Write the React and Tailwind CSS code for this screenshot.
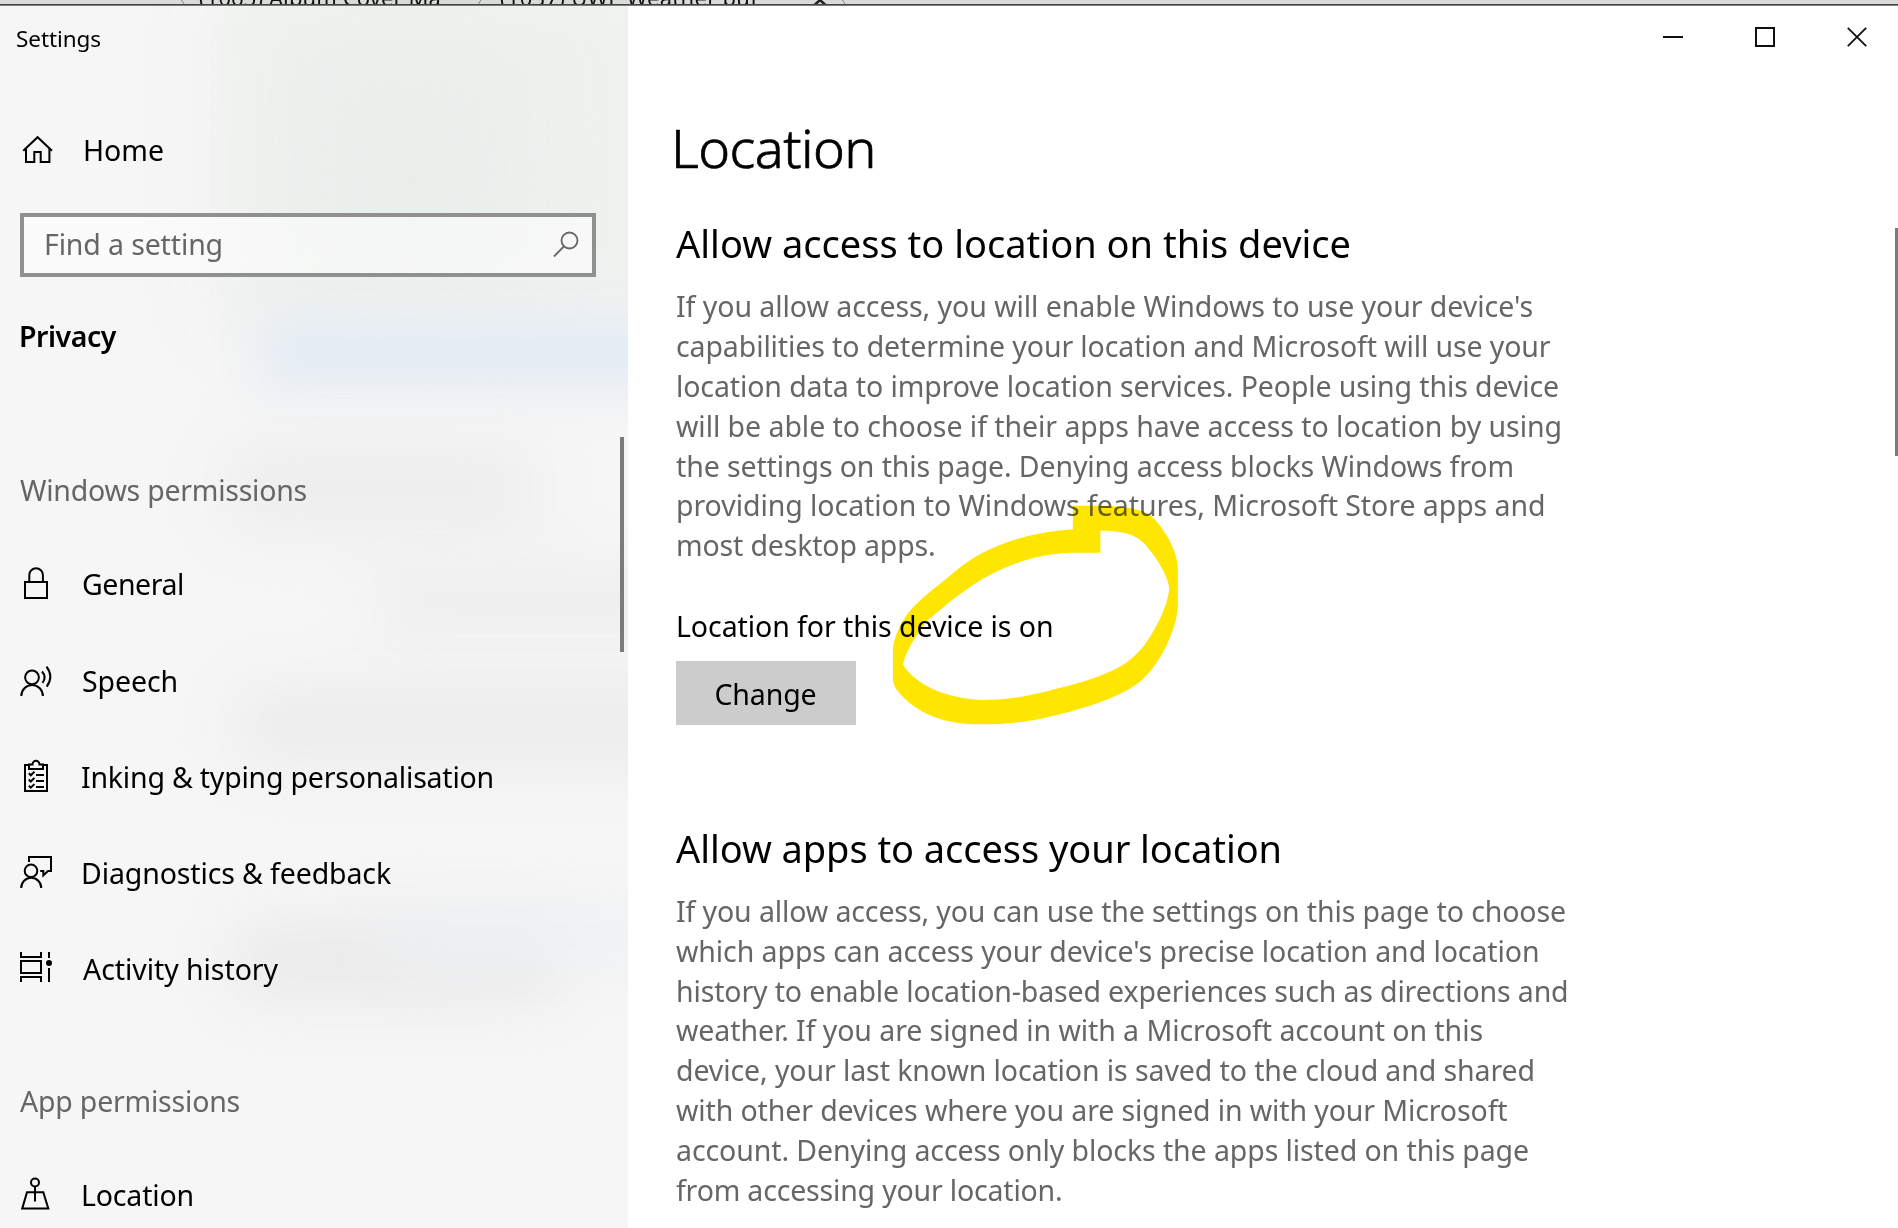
import { useLayoutEffect, useRef, useState } from "react";

// One line of text whose tracking is set so that it spans `width` pixels.
function Fit({ width, children, className = "" }) {
  const ref = useRef(null);
  const [spacing, setSpacing] = useState(0);
  useLayoutEffect(() => {
    const natural = ref.current.getBoundingClientRect().width;
    setSpacing((width - natural) / children.length);
  }, []);
  return (
    <span
      ref={ref}
      className={"inline-block whitespace-pre " + className}
      style={{ letterSpacing: spacing ? `${spacing}px` : undefined }}
    >
      {children}
    </span>
  );
}

function Icon({ children }) {
  return (
    <svg width="36" height="36" viewBox="0 0 36 36" fill="none" stroke="#000" strokeWidth="2" className="shrink-0">
      {children}
    </svg>
  );
}

const HomeIcon = () => (
  <Icon>
    <path d="M5.3 18.8 L19.6 5.2 L34 18.8" />
    <path d="M8 16.5V30H16.3V20H22.7V30H31.4V16.5" />
  </Icon>
);
const LockIcon = () => (
  <Icon>
    <rect x="7" y="16" width="22" height="16" />
    <path d="M11.3 16V9a6.8 6.8 0 0 1 13.6 0V16" />
  </Icon>
);
const SpeechIcon = () => (
  <Icon>
    <circle cx="14" cy="15.3" r="6.9" />
    <path d="M3.3 34a10.8 11 0 0 1 21.6 0" />
    <path d="M24 9.5q5 5.5 0.5 11.3" />
    <path d="M28.5 4.7q7.6 10 0.2 20" />
  </Icon>
);
const ClipboardIcon = () => (
  <Icon>
    <path d="M12 7H7V33H29V7H24" />
    <path d="M11 6.5V11H25V6.5H21.5a3.5 3.8 0 0 0-7 0Z" />
    <path d="M10.8 15.3l2 2 3.6-3.6M10.8 21.5l2 2 3.6-3.6M10.8 27.7l2 2 3.6-3.6" />
    <path d="M18 17h8M18 23h8M18 29h8" />
  </Icon>
);
const FeedbackIcon = () => (
  <Icon>
    <path d="M11 8V3H33V17H30L25.3 21.5V17H22.2" />
    <circle cx="13" cy="16.8" r="6.3" />
    <path d="M3.2 34a10 10.2 0 0 1 20 0" />
  </Icon>
);
const HistoryIcon = () => (
  <Icon>
    <path d="M3 2V7H23V2" />
    <rect x="3" y="11" width="20" height="12" />
    <path d="M3 32V27H23V32" />
    <path d="M31 2V8M31 18V32" />
    <circle cx="31" cy="13" r="3" fill="#000" stroke="none" />
  </Icon>
);
const LocationIcon = () => (
  <Icon>
    <circle cx="17" cy="6.5" r="4" />
    <path d="M17 10.5V25.5" />
    <path d="M9 16.3H25.3L30.3 32.6H4.2Z" />
  </Icon>
);

const permissions = [
  { icon: LockIcon, label: "General", width: 102, pad: "pl-[28px] pt-px" },
  { icon: SpeechIcon, label: "Speech", width: 96, pad: "pl-[28px] pt-0.5" },
  { icon: ClipboardIcon, label: "Inking & typing personalisation", width: 413, pad: "pl-[27px] pt-0.5" },
  { icon: FeedbackIcon, label: "Diagnostics & feedback", width: 310, pad: "pl-[27px] pt-0.5" },
  { icon: HistoryIcon, label: "Activity history", width: 195, pad: "pl-[29px] pt-0.5" },
];

const deviceText = [
  ["If you allow access, you will enable Windows to use your device's", 857],
  ["capabilities to determine your location and Microsoft will use your", 874.5],
  ["location data to improve location services. People using this device", 883],
  ["will be able to choose if their apps have access to location by using", 886],
  ["the settings on this page. Denying access blocks Windows from", 838],
  ["providing location to Windows features, Microsoft Store apps and", 869.5],
  ["most desktop apps.", 259.5],
];

const appsText = [
  ["If you allow access, you can use the settings on this page to choose", 890],
  ["which apps can access your device's precise location and location", 863.5],
  ["history to enable location-based experiences such as directions and", 892.5],
  ["weather. If you are signed in with a Microsoft account on this", 807],
  ["device, your last known location is saved to the cloud and shared", 859],
  ["with other devices where you are signed in with your Microsoft", 831.5],
  ["account. Denying access only blocks the apps listed on this page", 853],
  ["from accessing your location.", 386.5],
];

function Paragraph({ lines }) {
  return (
    <div className="text-[28.5px] text-[#666666]">
      {lines.map(([text, width]) => (
        <div key={text} className="h-[39.9px] leading-[39.9px]">
          <Fit width={width}>{text}</Fit>
        </div>
      ))}
    </div>
  );
}

function NavRow({ icon: I, label, width, pad }) {
  return (
    <div className="flex h-24 shrink-0 items-center pl-[18px]">
      <I />
      <div className={pad}>
        <Fit width={width}>{label}</Fit>
      </div>
    </div>
  );
}

// Acrylic tint of the side panel.
function Acrylic() {
  return (
    <div className="absolute inset-0 overflow-hidden">
      <div className="absolute left-[215px] -top-10 h-[360px] w-[600px] bg-[#eff2ef] blur-[36px]" />
      <div className="absolute left-[290px] top-[40px] h-[250px] w-[240px] bg-[#eaeeeb] blur-[50px]" />
      <div className="absolute left-[260px] top-[312px] h-[70px] w-[500px] bg-[#e4ebf4] blur-[24px]" />
      <div className="absolute left-[230px] top-[445px] h-[75px] w-[300px] bg-[#ececec] blur-[32px]" />
      <div className="absolute left-[380px] top-[565px] h-[60px] w-[400px] bg-[#eeedee] blur-[30px]" />
      <div className="absolute left-[240px] top-[685px] h-[70px] w-[520px] bg-[#ebebec] blur-[30px]" />
      <div className="absolute left-[235px] top-[920px] h-[70px] w-[320px] bg-[#e9e9ea] blur-[30px]" />
      <div className="absolute left-[380px] top-[905px] h-[50px] w-[400px] bg-[#eef0f2] blur-[28px]" />
    </div>
  );
}

function TabEdge({ d }) {
  return (
    <svg width="4" height="4" viewBox="0 0 4 4" stroke="#888" strokeWidth="1" fill="none" className="shrink-0">
      <path d={d} />
    </svg>
  );
}

function TabStrip() {
  return (
    <div className="flex h-1.5 shrink-0 flex-col overflow-hidden border-b border-[#7d7d7d] bg-[#444444]">
      <div className="flex h-1 items-end overflow-hidden bg-[#dadada] pl-[181px] text-[22px] leading-none text-[#111111]">
        <TabEdge d="M0.5 0L3 4" />
        <div className="ml-[14px] w-[279px] translate-y-[4px]">
          <Fit width={242}>(1065) Album Cover Ma</Fit>
        </div>
        <TabEdge d="M3 0L0.5 4" />
        <div className="ml-[18px] w-[313px] translate-y-[4px]">
          <Fit width={258}>(1037) UWE Weather buf</Fit>
        </div>
        <svg width="14" height="4" viewBox="0 0 14 4" stroke="#222" strokeWidth="2.5" fill="none">
          <path d="M1.5 5L7 0L12.5 5" />
        </svg>
        <div className="ml-[15px] h-1">
          <TabEdge d="M0.5 0L3 4" />
        </div>
      </div>
    </div>
  );
}

function Sidebar() {
  return (
    <aside className="relative flex w-[628px] shrink-0 flex-col overflow-hidden bg-[#f6f6f6]">
      <Acrylic />
      <div className="relative flex flex-col">
        <div className="mt-[17px] h-8 pl-4 text-[22.5px] leading-8">
          <Fit width={85}>Settings</Fit>
        </div>
        <div className="mt-[71px] flex h-12 items-center pl-[18px]">
          <HomeIcon />
          <div className="pl-[29px] pt-px">
            <Fit width={81}>Home</Fit>
          </div>
        </div>
        <div className="ml-5 mt-[39px] flex h-16 w-[576px] items-center justify-between border-4 border-[#8f908f] bg-white/50 pb-[2px] pl-[20px] pr-[12px] text-[#666666]">
          <Fit width={179}>Find a setting</Fit>
          <svg width="28" height="28" viewBox="0 0 28 28" fill="none" stroke="#666" strokeWidth="1.8">
            <circle cx="17.5" cy="10.5" r="8" />
            <path d="M11.8 16.5L2 26.5" />
          </svg>
        </div>
        <div className="mt-[39px] h-10 pl-[19px] font-semibold leading-10">
          <Fit width={97}>Privacy</Fit>
        </div>
        <div className="mt-[114px] h-10 pl-5 leading-10 text-[#666666]">
          <Fit width={287}>Windows permissions</Fit>
        </div>
        <nav className="mt-[26px] flex flex-col">
          {permissions.map((p) => (
            <NavRow key={p.label} {...p} />
          ))}
        </nav>
        <div className="mt-[65px] h-10 pl-5 leading-10 text-[#666666]">
          <Fit width={220}>App permissions</Fit>
        </div>
        <div className="mt-[25px]">
          <NavRow icon={LocationIcon} label="Location" width={113} pad="pl-[27px] pt-0.5" />
        </div>
      </div>
      <div className="absolute right-1 top-[431px] h-[215px] w-1 bg-[#7b7b7b]" />
    </aside>
  );
}

function WindowControls() {
  return (
    <div className="flex items-center justify-end gap-[72px] pr-[31px] pt-[21px]">
      <div className="h-0.5 w-5 bg-[#111111]" />
      <div className="size-5 border-2 border-[#111111]" />
      <svg width="20" height="20" viewBox="0 0 20 20" stroke="#111" strokeWidth="1.8">
        <path d="M0.8 0.8L19.2 19.2M19.2 0.8L0.8 19.2" />
      </svg>
    </div>
  );
}

// Yellow marker ring drawn over the page.
function Highlighter() {
  return (
    <svg
      className="pointer-events-none absolute left-[32px] top-[474px] mix-blend-multiply"
      width="560"
      height="260"
      viewBox="0 0 1568 780"
      preserveAspectRatio="none"
    >
      <path
        fill="#ffe600"
        fillRule="evenodd"
        d="M1156 77H1235C1330 80 1360 92 1385 118C1425 165 1450 225 1450 265V375C1450 440 1400 560 1340 608C1290 650 1200 680 1130 700C1040 726 985 733 900 733C800 733 730 705 680 650C655 622 652 610 652 590V520C652 470 680 410 720 370C745 343 790 308 820 280C900 205 1010 160 1156 148ZM1233 152C1330 152 1350 180 1375 215C1400 250 1425 295 1426 327C1420 380 1395 430 1375 465C1350 510 1320 545 1265 572C1200 605 1130 620 1060 640C980 660 930 660 900 660C800 655 715 615 680 553C690 510 715 470 750 420C785 390 820 355 850 335C930 270 1040 220 1156 218H1233Z"
      />
    </svg>
  );
}

function Content() {
  return (
    <main className="relative flex-1 overflow-hidden bg-white">
      <WindowControls />
      <div className="pl-12">
        <h1 className="-ml-[5px] mt-[64px] h-[72px] text-[54px] font-light leading-[72px] [-webkit-text-stroke:0.7px_#000]">
          <Fit width={205}>Location</Fit>
        </h1>
        <h2 className="mt-[34px] h-[52px] text-[38px] leading-[52px]">
          <Fit width={675}>Allow access to location on this device</Fit>
        </h2>
        <div className="mt-[18px]">
          <Paragraph lines={deviceText} />
        </div>
        <div className="mt-[39.3px] h-10 leading-10">
          <Fit width={377.5}>Location for this device is on</Fit>
        </div>
        <button className="mt-[15.5px] flex h-16 w-[180px] items-center justify-center bg-[#cccccc] pr-px pt-0.5">
          <Fit width={102}>Change</Fit>
        </button>
        <h2 className="mt-[96.5px] h-[52px] text-[38px] leading-[52px]">
          <Fit width={606}>Allow apps to access your location</Fit>
        </h2>
        <div className="mt-[18.2px]">
          <Paragraph lines={appsText} />
        </div>
      </div>
      <Highlighter />
      <div className="absolute right-0 top-[222px] h-[228px] w-[3px] bg-[#7a7a7a]" />
    </main>
  );
}

export default function App() {
  return (
    <div className="flex h-[1228px] w-[1898px] flex-col overflow-hidden bg-white font-['Noto_Sans','Open_Sans',sans-serif] text-[28.5px] text-black">
      <TabStrip />
      <div className="flex min-h-0 flex-1">
        <Sidebar />
        <Content />
      </div>
    </div>
  );
}
